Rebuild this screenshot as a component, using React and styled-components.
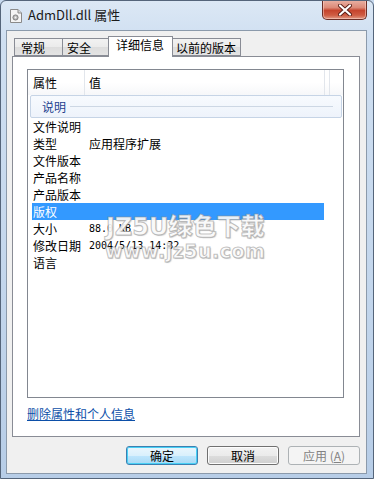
import React from "react";
import styled, { createGlobalStyle } from "styled-components";

const Global = createGlobalStyle`
  html, body { margin: 0; padding: 0; background: #c7d9ee; }
  * { box-sizing: border-box; }
`;

const CJK = `"Noto Sans CJK SC", "Noto Sans", sans-serif`;

const Window = styled.div`
  position: relative;
  width: 374px;
  height: 479px;
  display: flex;
  flex-direction: column;
  border: 1px solid #55657a;
  border-radius: 6px 6px 0 0;
  background: linear-gradient(180deg, #dce8f5 0%, #cfdff1 8%, #c3d6ec 60%, #b7cde7 100%);
  font-family: ${CJK};
  font-size: 12px;
  color: #000;
  overflow: hidden;
`;

const TitleBar = styled.div`
  height: 29px;
  display: flex;
  align-items: flex-start;
  padding-left: 9px;
  flex-shrink: 0;
`;

const TitleIcon = styled.svg`
  margin-top: 8px;
  width: 12px;
  height: 14px;
  flex-shrink: 0;
`;

const TitleText = styled.div`
  margin-left: 6px;
  margin-top: 5px;
  font-size: 13px;
  line-height: 18px;
  color: #1a1a1a;
`;

const CloseButton = styled.div`
  margin-left: auto;
  margin-right: 6px;
  margin-top: -1px;
  width: 45px;
  height: 20px;
  border: 1px solid #6b2e27;
  border-top: none;
  border-radius: 0 0 5px 5px;
  background: linear-gradient(180deg, #eab3a6 0%, #dc8a78 40%, #c5442d 55%, #cf5c43 80%, #e09a86 100%);
  box-shadow: inset 0 0 0 1px rgba(255, 220, 210, 0.5);
  display: flex;
  align-items: center;
  justify-content: center;
`;

const Client = styled.div`
  flex: 1;
  margin: 0 6px 4px 5px;
  border: 1px solid #8b9aab;
  background: #f0f0f0;
  display: flex;
  flex-direction: column;
  padding-top: 5px;
`;

const TabRow = styled.div`
  display: flex;
  align-items: flex-end;
  padding-left: 7px;
  height: 20px;
  position: relative;
  z-index: 1;
`;

const Tab = styled.div`
  width: ${(p) => p.$w}px;
  height: ${(p) => (p.$active ? 21 : 18)}px;
  margin-right: -1px;
  margin-bottom: ${(p) => (p.$active ? -1 : 0)}px;
  padding-left: ${(p) => p.$pad}px;
  border: 1px solid #898c95;
  border-bottom: ${(p) => (p.$active ? "none" : "1px solid #898c95")};
  background: ${(p) =>
    p.$active ? "#ffffff" : "linear-gradient(180deg, #f2f2f2 0%, #ebebeb 50%, #dddddd 51%, #e4e4e4 100%)"};
  position: relative;
  z-index: ${(p) => (p.$active ? 2 : 1)};
  font-size: 12px;
  line-height: ${(p) => (p.$active ? 16 : 17)}px;
  white-space: nowrap;
`;

const Panel = styled.div`
  flex: 1;
  margin: 0 6px 0 5px;
  border: 1px solid #898c95;
  background: #ffffff;
  padding: 12px 15px 0 14px;
  display: flex;
  flex-direction: column;
`;

const ListBox = styled.div`
  height: 329px;
  border: 1px solid #828790;
  background: #fff;
  position: relative;
  display: flex;
  flex-direction: column;
`;

const Header = styled.div`
  height: 25px;
  display: flex;
  background: linear-gradient(180deg, #ffffff 0%, #ffffff 50%, #f6f7f9 100%);
  flex-shrink: 0;
`;

const HeaderCell = styled.div`
  width: ${(p) => p.$w}px;
  padding-left: ${(p) => p.$pad}px;
  border-right: 1px solid ${(p) => (p.$line ? "#e2e6ec" : "transparent")};
  line-height: 25px;
  font-size: 12px;
  flex-shrink: 0;
`;

const GroupRow = styled.div`
  height: 23px;
  margin: 0 1px 0 2px;
  border: 1px solid #c6d4e6;
  border-radius: 2px;
  background: linear-gradient(180deg, #f7fafe 0%, #eef3fb 100%);
  display: flex;
  align-items: center;
  padding-left: 11px;
  padding-right: 8px;
  color: #233f8f;
  flex-shrink: 0;
`;

const GroupLine = styled.div`
  flex: 1;
  height: 1px;
  margin-left: 4px;
  background: #cdd7e4;
`;

const Row = styled.div`
  height: 17px;
  width: 292px;
  margin-left: 4px;
  display: flex;
  align-items: center;
  background: ${(p) => (p.$selected ? "#3399ff" : "transparent")};
  color: ${(p) => (p.$selected ? "#ffffff" : "#000")};
  flex-shrink: 0;
`;

const KeyCell = styled.div`
  width: 57px;
  padding-left: 1px;
  line-height: 17px;
  white-space: nowrap;
`;

const ValueCell = styled.div`
  line-height: 17px;
  white-space: nowrap;
  font-family: ${(p) => (p.$mono ? `"DejaVu Sans Mono", "Liberation Mono", monospace` : CJK)};
  font-size: ${(p) => (p.$mono ? "10px" : "12px")};
`;

const Link = styled.a`
  margin-top: 8px;
  align-self: flex-start;
  color: #0c4fa8;
  text-decoration: underline;
  font-size: 12px;
  line-height: 16px;
  cursor: pointer;
`;

const ButtonRow = styled.div`
  height: 36px;
  display: flex;
  justify-content: flex-end;
  align-items: flex-start;
  gap: 9px;
  padding: 9px 6px 0 0;
  flex-shrink: 0;
`;

const Button = styled.div`
  width: 72px;
  height: 19px;
  border-radius: 3px;
  border: 1px solid ${(p) => (p.$default ? "#3c7fb1" : p.$disabled ? "#adb2b5" : "#707070")};
  background: ${(p) =>
    p.$default
      ? "linear-gradient(180deg, #eaf6fd 0%, #d9f0fc 50%, #bee6fd 51%, #a7d9f5 100%)"
      : p.$disabled
      ? "#f4f4f4"
      : "linear-gradient(180deg, #f2f2f2 0%, #ebebeb 50%, #dddddd 51%, #cfcfcf 100%)"};
  box-shadow: ${(p) => (p.$default ? "inset 0 0 0 1px #48d0f5" : p.$disabled ? "none" : "inset 0 0 0 1px #fcfcfc")};
  color: ${(p) => (p.$disabled ? "#838383" : "#000")};
  font-size: 12px;
  line-height: 17px;
  text-align: center;
`;

const Mnemonic = styled.span`
  text-decoration: underline;
`;

const Watermark = styled.div`
  position: absolute;
  left: 104px;
  top: 213px;
  pointer-events: none;
  display: flex;
  flex-direction: column;
  align-items: center;
  font-family: "DejaVu Sans", ${CJK};
  font-weight: 900;
  color: rgba(255, 255, 255, 0.9);
  -webkit-text-stroke: 1px rgba(140, 140, 140, 0.55);
  text-shadow: 1px 1px 1px rgba(120, 120, 120, 0.35);
`;

const WmBig = styled.div`
  font-size: 24px;
  line-height: 26px;
  white-space: nowrap;
  letter-spacing: 0px;
`;

const WmSmall = styled.div`
  font-size: 19px;
  line-height: 22px;
  white-space: nowrap;
  letter-spacing: 0.5px;
`;

const rows = [
  { k: "文件说明", v: "" },
  { k: "类型", v: "应用程序扩展" },
  { k: "文件版本", v: "" },
  { k: "产品名称", v: "" },
  { k: "产品版本", v: "" },
  { k: "版权", v: "", sel: true },
  { k: "大小", v: "88.0 KB", mono: true },
  { k: "修改日期", v: "2004/5/13 14:32", mono: true },
  { k: "语言", v: "" },
];

export default function App() {
  return (
    <>
      <Global />
      <Window>
        <TitleBar>
          <TitleIcon viewBox="0 0 12 14">
            <path d="M0.5 0.5 H8 L11.5 4 V13.5 H0.5 Z" fill="#f4f4f4" stroke="#8a8a8a" />
            <path d="M8 0.5 V4 H11.5" fill="#dcdcdc" stroke="#8a8a8a" />
            <circle cx="5.5" cy="8.5" r="2.6" fill="#b9b9b9" stroke="#6f6f6f" strokeWidth="0.8" />
            <circle cx="5.5" cy="8.5" r="0.9" fill="#f4f4f4" />
          </TitleIcon>
          <TitleText>AdmDll.dll 属性</TitleText>
          <CloseButton>
            <svg width="14" height="12" viewBox="0 0 14 12">
              <path d="M2 1.5 L12 10.5 M12 1.5 L2 10.5" stroke="#5a1e17" strokeWidth="4" strokeLinecap="round" />
              <path d="M2 1.5 L12 10.5 M12 1.5 L2 10.5" stroke="#ffffff" strokeWidth="2.2" strokeLinecap="round" />
            </svg>
          </CloseButton>
        </TitleBar>
        <Client>
          <TabRow>
            <Tab $w={49} $pad={6}>常规</Tab>
            <Tab $w={47} $pad={4}>安全</Tab>
            <Tab $w={65} $pad={7} $active>详细信息</Tab>
            <Tab $w={69} $pad={3}>以前的版本</Tab>
          </TabRow>
          <Panel>
            <ListBox>
              <Header>
                <HeaderCell $w={57} $pad={5} $line>属性</HeaderCell>
                <HeaderCell $w={240} $pad={4} $line>值</HeaderCell>
                <HeaderCell $w={5} $pad={0} $line />
              </Header>
              <GroupRow>
                说明
                <GroupLine />
              </GroupRow>
              {rows.map((r) => (
                <Row key={r.k} $selected={r.sel}>
                  <KeyCell>{r.k}</KeyCell>
                  <ValueCell $mono={r.mono}>{r.v}</ValueCell>
                </Row>
              ))}
            </ListBox>
            <Link>删除属性和个人信息</Link>
          </Panel>
          <ButtonRow>
            <Button $default>确定</Button>
            <Button>取消</Button>
            <Button $disabled>
              应用 (<Mnemonic>A</Mnemonic>)
            </Button>
          </ButtonRow>
        </Client>
        <Watermark>
          <WmBig>JZ5U绿色下载</WmBig>
          <WmSmall>www.jz5u.com</WmSmall>
        </Watermark>
      </Window>
    </>
  );
}
